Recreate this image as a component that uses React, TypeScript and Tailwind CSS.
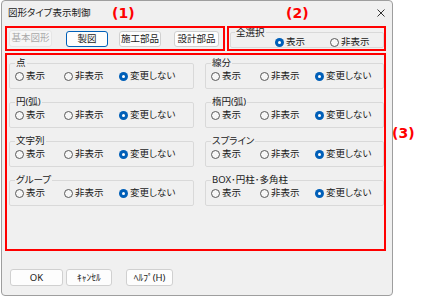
import React from "react";

const Radio = ({ label, checked, w }: { label: string; checked?: boolean; w?: string }) => (
  <div className={`flex items-center gap-[2px] shrink-0 ${w ?? ""}`}>
    {checked ? (
      <span className="w-[9px] h-[9px] rounded-full bg-[#005fb8] flex items-center justify-center shrink-0">
        <span className="w-[3px] h-[3px] rounded-full bg-white" />
      </span>
    ) : (
      <span className="w-[9px] h-[9px] rounded-full border border-[#5a5a5a] bg-[#f7f7f7] shrink-0" />
    )}
    <span className="leading-[12px] whitespace-nowrap">{label}</span>
  </div>
);

const Group = ({ title }: { title: string }) => (
  <fieldset className="h-[32px] border border-[#d9d9d9] rounded-[2px] pl-[5px]">
    <legend className="px-[1px] leading-[12px] whitespace-nowrap">{title}</legend>
    <div className="flex items-center h-[14px]">
      <Radio label="表示" w="w-[49px]" />
      <Radio label="非表示" w="w-[55px]" />
      <Radio label="変更しない" checked />
    </div>
  </fieldset>
);

const Btn = ({ label, cls }: { label: string; cls: string }) => (
  <div
    className={`h-[16px] flex items-center justify-center rounded-[3px] border border-[#d0d0d0] bg-[#fdfdfd] leading-none whitespace-nowrap ${cls}`}
  >
    {label}
  </div>
);

export default function App() {
  const groups = ["点", "線分", "円(弧)", "楕円(弧)", "文字列", "スプライン", "グループ", "BOX･円柱･多角柱"];
  return (
    <div className="relative w-[423px] h-[298px] bg-white overflow-hidden text-[9.5px] text-[#1a1a1a] font-['Noto_Sans','Noto_Sans_CJK_JP',sans-serif] [font-feature-settings:'palt']">
      <div className="ml-[1px] w-[392px] h-[296px] border border-[#9e9e9e] rounded-[4px] bg-[#f0f0f0] flex flex-col">
        <div className="h-[24px] flex items-center justify-between pl-[6px] pr-[7px]">
          <span className="leading-none">図形タイプ表示制御</span>
          <svg width="8" height="8" viewBox="0 0 8 8">
            <path d="M0.5 0.5 L7.5 7.5 M7.5 0.5 L0.5 7.5" stroke="#333" strokeWidth="1" />
          </svg>
        </div>
        <div className="mt-[1px] ml-[3px] flex gap-[2px]">
          <div className="w-[220px] h-[25px] border-2 border-[#ff0000] flex items-center">
            <div className="ml-[2px] w-[43px] h-[17px] flex items-center justify-center rounded-[3px] border border-[#e6e6e6] bg-[#f6f6f6] text-[#a8a8a8]">
              基本図形
            </div>
            <Btn label="製図" cls="ml-[14px] w-[42px] !border-[#005fb8]" />
            <Btn label="施工部品" cls="ml-[11px] w-[42px]" />
            <Btn label="設計部品" cls="ml-[13px] w-[45px]" />
          </div>
          <div className="w-[159px] h-[25px] border-2 border-[#ff0000]">
            <fieldset className="ml-[1px] w-[154px] h-[20px] border border-[#d9d9d9] rounded-[2px] pl-[44px]">
              <legend className="-ml-[40px] px-[1px] leading-[9px]">全選択</legend>
              <div className="flex items-center h-[10px]">
                <Radio label="表示" checked w="w-[55px]" />
                <Radio label="非表示" />
              </div>
            </fieldset>
          </div>
        </div>
        <div className="mt-[2px] ml-[3px] w-[381px] h-[198px] border-2 border-[#ff0000] pt-[2px] pl-[2px]">
          <div className="grid grid-cols-[185px_179px] gap-x-[11px] gap-y-[7px]">
            {groups.map((g) => (
              <Group key={g} title={g} />
            ))}
          </div>
        </div>
        <div className="mt-[18px] ml-[8px] flex">
          <Btn label="OK" cls="w-[53px] h-[17px]" />
          <Btn label="ｷｬﾝｾﾙ" cls="ml-[3px] w-[46px] h-[17px]" />
          <Btn label="ﾍﾙﾌﾟ(H)" cls="ml-[14px] w-[47px] h-[17px]" />
        </div>
      </div>
      <span className="absolute left-[112px] top-[5px] text-[14px] font-bold text-[#ff0000] font-['DejaVu_Sans',sans-serif] leading-[16px]">(1)</span>
      <span className="absolute left-[286px] top-[5px] text-[14px] font-bold text-[#ff0000] font-['DejaVu_Sans',sans-serif] leading-[16px]">(2)</span>
      <span className="absolute left-[392px] top-[125px] text-[14px] font-bold text-[#ff0000] font-['DejaVu_Sans',sans-serif] leading-[16px]">(3)</span>
    </div>
  );
}
